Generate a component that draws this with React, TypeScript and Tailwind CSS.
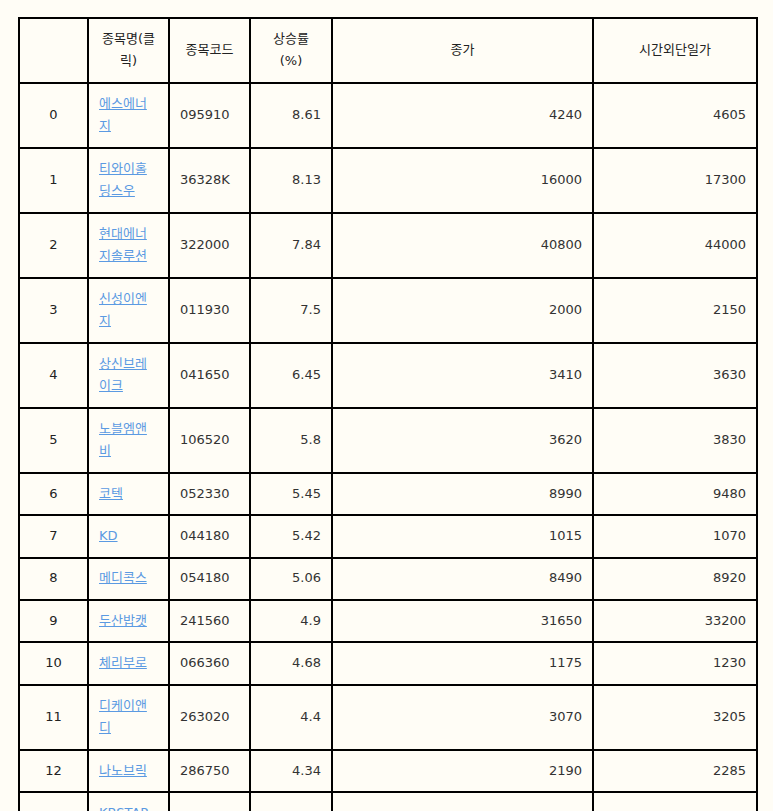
import React from "react";

const rows: [string, string, string, string, string, string][] = [
  ["0", "에스에너지", "095910", "8.61", "4240", "4605"],
  ["1", "티와이홀딩스우", "36328K", "8.13", "16000", "17300"],
  ["2", "현대에너지솔루션", "322000", "7.84", "40800", "44000"],
  ["3", "신성이엔지", "011930", "7.5", "2000", "2150"],
  ["4", "상신브레이크", "041650", "6.45", "3410", "3630"],
  ["5", "노블엠앤비", "106520", "5.8", "3620", "3830"],
  ["6", "코텍", "052330", "5.45", "8990", "9480"],
  ["7", "KD", "044180", "5.42", "1015", "1070"],
  ["8", "메디콕스", "054180", "5.06", "8490", "8920"],
  ["9", "두산밥캣", "241560", "4.9", "31650", "33200"],
  ["10", "체리부로", "066360", "4.68", "1175", "1230"],
  ["11", "디케이앤디", "263020", "4.4", "3070", "3205"],
  ["12", "나노브릭", "286750", "4.34", "2190", "2285"],
  ["13", "KBSTAR 중소형고배당", "315960", "4.21", "10540", "10980"],
];

const cell =
  "border-2 border-black px-[10px] py-[8.9px] align-middle leading-[22.6px]";

export default function App() {
  return (
    <div
      className="min-h-screen bg-[#fffdf6] pl-[18px] pt-[17px] text-[13px] text-[#333]"
      style={{ fontFamily: '"DejaVu Sans", "Noto Sans CJK KR", sans-serif' }}
    >
      <table className="table-fixed border-collapse w-[738px]">
        <colgroup>
          <col className="w-[69px]" />
          <col className="w-[81px]" />
          <col className="w-[81px]" />
          <col className="w-[82px]" />
          <col className="w-[261px]" />
          <col className="w-[164px]" />
        </colgroup>
        <thead>
          <tr className="text-[#222]">
            <th className={`${cell} font-normal text-center`}></th>
            <th className={`${cell} font-normal text-center`}>종목명(클릭)</th>
            <th className={`${cell} font-normal text-center`}>종목코드</th>
            <th className={`${cell} font-normal text-center`}>
              상승률
              <br />
              (%)
            </th>
            <th className={`${cell} font-normal text-center`}>종가</th>
            <th className={`${cell} font-normal text-center`}>시간외단일가</th>
          </tr>
        </thead>
        <tbody>
          {rows.map((r) => (
            <tr key={r[0]}>
              <td className={`${cell} text-center text-[#222]`}>{r[0]}</td>
              <td className={`${cell} text-left`}>
                <a href="#" className="text-[#5b9ae2] underline">
                  {r[1]}
                </a>
              </td>
              <td className={`${cell} text-left`}>{r[2]}</td>
              <td className={`${cell} text-right`}>{r[3]}</td>
              <td className={`${cell} text-right`}>{r[4]}</td>
              <td className={`${cell} text-right`}>{r[5]}</td>
            </tr>
          ))}
        </tbody>
      </table>
    </div>
  );
}
